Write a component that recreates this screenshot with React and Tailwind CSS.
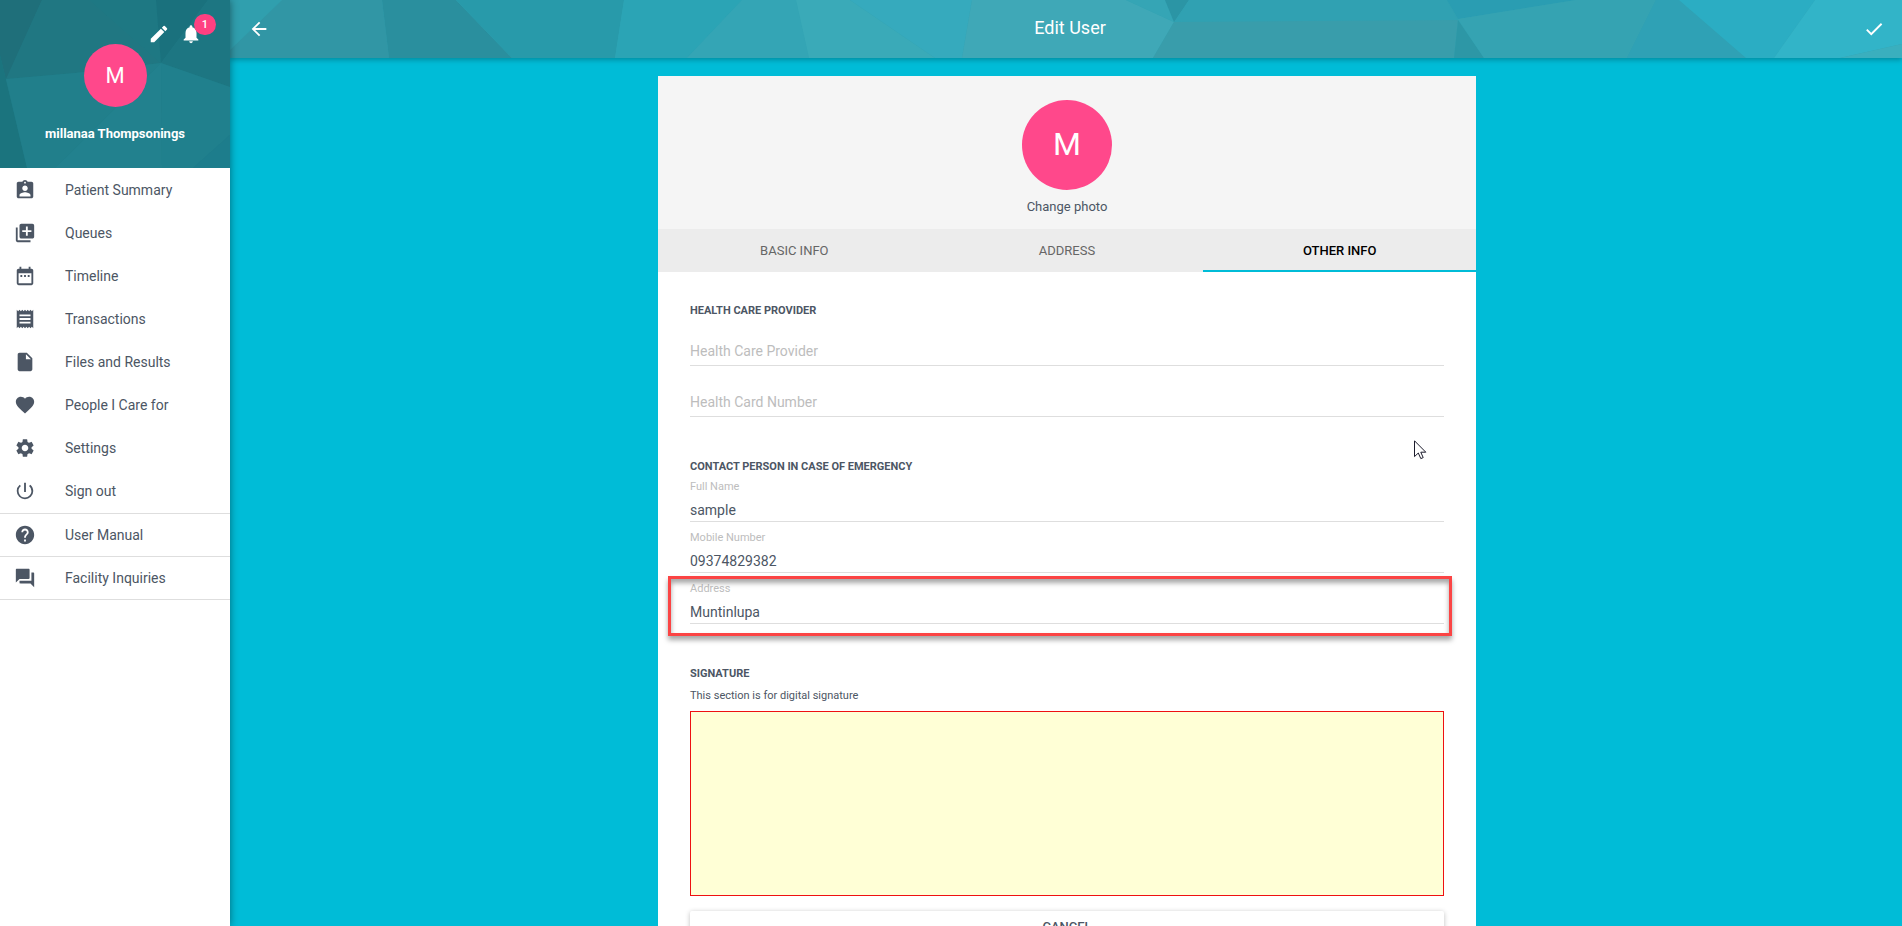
import React, { useState } from 'react'
import {
  MdArrowBack,
  MdAssignmentInd,
  MdCheck,
  MdDateRange,
  MdEdit,
  MdFavorite,
  MdForum,
  MdHelp,
  MdInsertDriveFile,
  MdLibraryAdd,
  MdNotifications,
  MdPowerSettingsNew,
  MdReceipt,
  MdSettings,
} from 'react-icons/md'

const mainLinks = [
  { label: 'Patient Summary', icon: MdAssignmentInd },
  { label: 'Queues', icon: MdLibraryAdd },
  { label: 'Timeline', icon: MdDateRange },
  { label: 'Transactions', icon: MdReceipt },
  { label: 'Files and Results', icon: MdInsertDriveFile },
  { label: 'People I Care for', icon: MdFavorite },
  { label: 'Settings', icon: MdSettings },
  { label: 'Sign out', icon: MdPowerSettingsNew },
]

const helpLinks = [
  { label: 'User Manual', icon: MdHelp },
  { label: 'Facility Inquiries', icon: MdForum },
]

const tabs = ['Basic Info', 'Address', 'Other Info']

// low-poly backdrops: [fill, points]
const sidebarShapes = [
  ['#1f6f7a', '0,0 42,0 6,80 0,55'],
  ['#1b747e', '0,55 6,80 27,168 0,168'],
  ['#207782', '42,0 90,0 161,63 75,73 6,79'],
  ['#1e7883', '90,0 156,0 161,63'],
  ['#1a717d', '156,0 208,0 161,63'],
  ['#1d7682', '208,0 230,0 230,87 161,63'],
  ['#217f8b', '6,79 75,73 161,63 55,168 27,168'],
  ['#22818e', '161,63 162,168 55,168'],
  ['#20808d', '161,63 230,87 230,135 193,168 162,168'],
  ['#1d7d8c', '230,135 230,168 193,168'],
]

const topbarShapes = [
  ['#309fae', '0,0 52,0 0,50'],
  ['#3196a5', '52,0 152,0 159,58 0,58 0,50'],
  ['#2a8f9e', '152,0 226,0 282,58 159,58'],
  ['#289aaa', '226,0 394,0 385,58 282,58'],
  ['#2ba4b5', '394,0 512,0 457,58 385,58'],
  ['#34a5b5', '512,0 566,0 579,58 457,58'],
  ['#3aaab8', '566,0 620,0 705,58 579,58'],
  ['#36aabd', '620,0 742,0 732,58 705,58'],
  ['#3fa8b7', '742,0 896,0 944,22 923,58 732,58'],
  ['#35a5b5', '896,0 935,0 944,22'],
  ['#2b95a5', '935,0 959,0 944,22'],
  ['#30a1b2', '959,0 1217,0 1228,20 944,23'],
  ['#399dab', '944,22 1228,20 1224,58 923,58'],
  ['#2a9db2', '1217,0 1346,0 1228,19'],
  ['#2d97a6', '1228,20 1254,58 1224,58'],
  ['#35a3b2', '1346,0 1426,0 1397,58 1254,58 1228,19'],
  ['#2fa1b5', '1426,0 1449,0 1516,58 1397,58'],
  ['#2badc3', '1449,0 1585,0 1544,58 1516,58'],
  ['#32b4c8', '1585,0 1672,0 1672,44 1610,58 1544,58'],
  ['#3aafbe', '1672,44 1672,58 1610,58'],
]

function Backdrop({ shapes, viewBox }){
  return (
    <svg className="absolute inset-0 -z-10 w-full h-full" viewBox={viewBox} preserveAspectRatio="none" aria-hidden="true">
      {shapes.map(([fill, points])=> (
        <polygon key={points} points={points} fill={fill} />
      ))}
    </svg>
  )
}

function NavLink({ label, icon: Icon, className = '' }){
  return (
    <a href="#" className={`flex items-center gap-[29px] h-[43px] px-3.5 text-sm ${className}`}>
      <Icon size={22} />
      {label}
    </a>
  )
}

function Sidebar(){
  return (
    <aside className="relative z-20 w-[230px] shrink-0 bg-white shadow-[0_0_8px_rgba(0,0,0,0.45)]">
      <div className="relative isolate h-[168px] flex flex-col items-center bg-[#1f7b87] text-white">
        <Backdrop shapes={sidebarShapes} viewBox="0 0 230 168" />
        <div className="flex self-end gap-2.5 h-11 pt-[23px] pr-7">
          <button aria-label="Edit profile" className="h-[22px]"><MdEdit size={22} /></button>
          <button aria-label="Notifications" className="relative h-[22px]">
            <MdNotifications size={22} />
            <span className="absolute left-3.5 -top-[9px] w-[22px] h-[21px] rounded-full bg-[#ff4081] text-[11px] leading-[21px] font-medium text-center">1</span>
          </button>
        </div>
        <div className="w-[63px] h-[63px] rounded-full bg-[#ff488b] flex items-center justify-center text-[22px]">M</div>
        <div className="mt-[17px] text-[13px] leading-5 font-bold">millanaa Thompsonings</div>
      </div>
      <nav>
        <div className="pb-px border-b border-[#dedede]">
          {mainLinks.map(l=> <NavLink key={l.label} {...l} />)}
        </div>
        {helpLinks.map(l=> <NavLink key={l.label} {...l} className="border-b border-[#dedede]" />)}
      </nav>
    </aside>
  )
}

function TopBar(){
  return (
    <header className="relative isolate z-10 h-[58px] shrink-0 flex items-center bg-[#33a2b2] text-white shadow-[0_2px_5px_rgba(0,0,0,0.26)]">
      <Backdrop shapes={topbarShapes} viewBox="0 0 1672 58" />
      <button aria-label="Back" className="w-[58px] h-full flex items-center justify-center"><MdArrowBack size={22} /></button>
      <h1 className="flex-1 pl-1.5 text-center text-lg leading-[56px] h-full">Edit User</h1>
      <button aria-label="Save" className="w-14 h-full flex items-center justify-center"><MdCheck size={22} /></button>
    </header>
  )
}

function SectionTitle({ children, className = '' }){
  return <h2 className={`h-4 text-[11px] leading-[18px] font-bold uppercase ${className}`}>{children}</h2>
}

function PlainField({ label, className = '' }){
  return (
    <input
      aria-label={label}
      placeholder={label}
      className={`block w-full h-7 pb-px text-sm border-b border-[#dedede] outline-none placeholder:text-[#bdbdbd] ${className}`}
    />
  )
}

function LabelField({ id, label, value, highlight, className = '' }){
  const [text, setText] = useState(value)
  return (
    <div className={`relative ${className}`}>
      <label htmlFor={id} className="block h-4 text-[11px] leading-[18px] text-[#bdbdbd]">{label}</label>
      <input
        id={id}
        value={text}
        onChange={e=>setText(e.target.value)}
        className="block w-full h-7 pt-1 text-sm border-b border-[#dedede] outline-none"
      />
      {highlight && (
        <div className="absolute -left-[22px] -right-2 -top-1 -bottom-3 border-3 border-[#fb4444] pointer-events-none shadow-[0_4px_5px_rgba(0,0,0,0.35),inset_0_4px_5px_rgba(0,0,0,0.35)]" />
      )}
    </div>
  )
}

function Pointer(){
  return (
    <svg className="absolute left-[756px] top-[364px] pointer-events-none" width="13" height="20" viewBox="0 0 13 20" aria-hidden="true">
      <path d="M0.5 0.8V16.6L4.3 13L6.8 18.6L9.2 17.6L6.8 12.2H11.8Z" fill="#fff" stroke="#1b1b2b" strokeWidth="1" />
    </svg>
  )
}

export default function App(){
  const [active, setActive] = useState('Other Info')

  return (
    <div className="flex h-screen overflow-hidden bg-[#00bcd7] text-[#4c5664] font-[Roboto,sans-serif]">
      <Sidebar />
      <div className="flex-1 min-w-0 flex flex-col">
        <TopBar />
        <main className="flex-1 min-h-0 overflow-y-auto [scrollbar-width:none] pt-[18px] pb-8 pl-0.5">
          <div className="relative w-full max-w-[818px] mx-auto bg-white">
            <div className="flex flex-col items-center h-[153px] pt-6 bg-[#f5f5f5]">
              <div className="w-[90px] h-[90px] pb-0.5 rounded-full bg-[#ff488b] text-white flex items-center justify-center text-[32px]">M</div>
              <button className="mt-[9px] text-[13px] leading-4">Change photo</button>
            </div>
            <div role="tablist" className="flex h-[43px] bg-[#ececec]">
              {tabs.map(t=> (
                <button
                  key={t}
                  role="tab"
                  aria-selected={t === active}
                  onClick={()=>setActive(t)}
                  className={`flex-1 pt-0.5 border-b-2 text-[13px] uppercase ${t === active ? 'border-[#00bcd7] text-black font-medium' : 'border-transparent text-[#666]'}`}
                >
                  {t}
                </button>
              ))}
            </div>
            <form className="px-8 pt-[30px] pb-8" onSubmit={e=>e.preventDefault()}>
              <SectionTitle>Health Care Provider</SectionTitle>
              <PlainField label="Health Care Provider" className="mt-5" />
              <PlainField label="Health Card Number" className="mt-[23px]" />

              <SectionTitle className="mt-[41px]">Contact person in case of emergency</SectionTitle>
              <LabelField id="fullName" label="Full Name" value="sample" className="mt-1" />
              <LabelField id="mobile" label="Mobile Number" value="09374829382" className="mt-[7px]" />
              <LabelField id="address" label="Address" value="Muntinlupa" className="mt-[7px]" highlight />

              <SectionTitle className="mt-[41px]">Signature</SectionTitle>
              <p className="mt-1.5 h-4 text-[11px] leading-[18px]">This section is for digital signature</p>
              <div className="mt-2 h-[185px] border border-[#ee1111] bg-[#ffffd6]" />
              <button type="button" className="mt-[15px] w-full h-[31px] rounded-xs bg-white text-[13px] font-medium uppercase shadow-[0_1px_5px_rgba(0,0,0,0.25)]">Cancel</button>
            </form>
            <Pointer />
          </div>
        </main>
      </div>
    </div>
  )
}
